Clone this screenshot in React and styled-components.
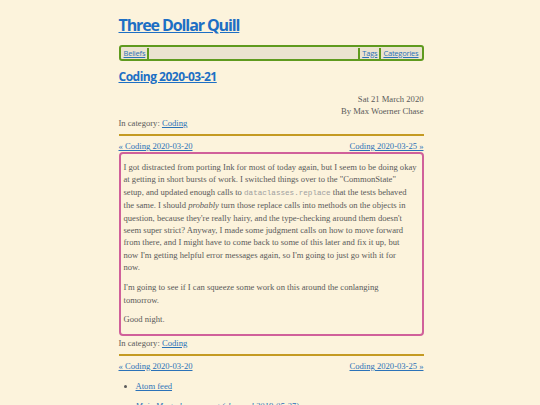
import React from 'react';
import styled, { createGlobalStyle } from 'styled-components';

const GlobalStyle = createGlobalStyle`
  html, body {
    margin: 0;
    padding: 0;
    background: #fcf3dc;
  }
  body {
    font-family: 'Liberation Serif', serif;
    color: #5a5a5a;
  }
  a {
    color: #2b72b8;
  }
`;

const Page = styled.div`
  width: 305px;
  margin: 0 auto;
  padding: 14px 0 0 2px;
`;

const SiteTitle = styled.h1`
  margin: 0 0 9px 0;
  font-family: 'Open Sans', sans-serif;
  font-size: 16px;
  font-weight: 700;
  letter-spacing: -1.1px;
  line-height: 22px;
  a {
    color: #1d6fc4;
  }
`;

const NavBar = styled.nav`
  display: flex;
  align-items: center;
  height: 12px;
  border: 2px solid #5f9a1e;
  border-radius: 3px;
  background: #ebe3cf;
  font-family: 'Open Sans', sans-serif;
  font-size: 7.5px;
  letter-spacing: -0.2px;
  padding: 0 1px;
`;

const NavItem = styled.a`
  padding: 0 2px;
  line-height: 11px;
  border-left: ${p => (p.$left ? '2px solid #5f9a1e' : 'none')};
  border-right: ${p => (p.$right ? '2px solid #5f9a1e' : 'none')};
`;

const Spacer = styled.div`
  flex: 1;
`;

const PostTitle = styled.h2`
  margin: 7px 0 7px 0;
  font-family: 'Open Sans', sans-serif;
  font-size: 12px;
  font-weight: 700;
  letter-spacing: -0.5px;
  line-height: 18px;
  a {
    color: #1d6fc4;
  }
`;

const Meta = styled.div`
  text-align: right;
  font-size: 8.6px;
  line-height: 12px;
`;

const Category = styled.div`
  font-size: 8.6px;
  line-height: 12px;
`;

const Rule = styled.hr`
  margin: 5px 0 4px 0;
  border: none;
  height: 2px;
  background: #c49a22;
`;

const PostNav = styled.div`
  display: flex;
  justify-content: space-between;
  font-size: 8.6px;
  line-height: 12px;
`;

const Article = styled.article`
  margin: 0 0 1px 0;
  border: 2px solid #d0609a;
  border-radius: 4px;
  padding: 7px 3px 8px 3px;
  font-size: 8.6px;
  line-height: 12.4px;
  p {
    margin: 0 0 7.5px 0;
  }
  p:last-child {
    margin-bottom: 0;
  }
  code {
    font-family: 'Liberation Mono', monospace;
    font-size: 7.6px;
    color: #a0a0a0;
  }
`;

const Links = styled.ul`
  margin: 4px 0 0 0;
  padding-left: 17px;
  font-size: 8.6px;
  line-height: 20px;
  li.plain {
    list-style: none;
    font-style: italic;
  }
`;

export default function App() {
  return (
    <>
      <GlobalStyle />
      <Page>
        <SiteTitle>
          <a href="#">Three Dollar Quill</a>
        </SiteTitle>
        <NavBar>
          <NavItem href="#" $right>Beliefs</NavItem>
          <Spacer />
          <NavItem href="#" $left>Tags</NavItem>
          <NavItem href="#" $left>Categories</NavItem>
        </NavBar>
        <PostTitle>
          <a href="#">Coding 2020-03-21</a>
        </PostTitle>
        <Meta>
          <div>Sat 21 March 2020</div>
          <div>By Max Woerner Chase</div>
        </Meta>
        <Category>
          In category: <a href="#">Coding</a>
        </Category>
        <Rule />
        <PostNav>
          <a href="#">« Coding 2020-03-20</a>
          <a href="#">Coding 2020-03-25 »</a>
        </PostNav>
        <Article>
          <p>
            I got distracted from porting Ink for most of today again, but I seem to be doing okay
            <br />
            at getting in short bursts of work. I switched things over to the "CommonState"
            <br />
            setup, and updated enough calls to <code>dataclasses.replace</code> that the tests behaved
            <br />
            the same. I should <em>probably</em> turn those replace calls into methods on the objects in
            <br />
            question, because they're really hairy, and the type-checking around them doesn't
            <br />
            seem super strict? Anyway, I made some judgment calls on how to move forward
            <br />
            from there, and I might have to come back to some of this later and fix it up, but
            <br />
            now I'm getting helpful error messages again, so I'm going to just go with it for
            <br />
            now.
          </p>
          <p>
            I'm going to see if I can squeeze some work on this around the conlanging
            <br />
            tomorrow.
          </p>
          <p>Good night.</p>
        </Article>
        <Category>
          In category: <a href="#">Coding</a>
        </Category>
        <Rule />
        <PostNav>
          <a href="#">« Coding 2020-03-20</a>
          <a href="#">Coding 2020-03-25 »</a>
        </PostNav>
        <Links>
          <li>
            <a href="#">Atom feed</a>
          </li>
          <li className="plain">
            <a href="#">Main Mastodon account (changed 2019-05-27)</a>
          </li>
        </Links>
      </Page>
    </>
  );
}
